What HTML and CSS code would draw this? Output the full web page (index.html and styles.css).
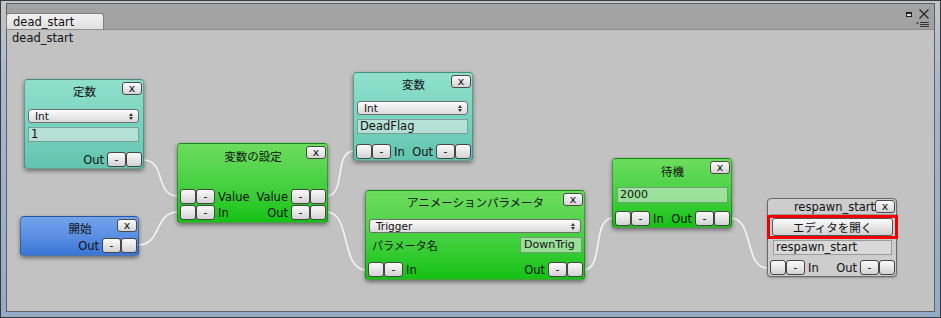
FILE: index.html
```html
<!DOCTYPE html>
<html lang="ja">
<head>
  <meta charset="UTF-8">
  <title>dead_start</title>
  <link rel="stylesheet" href="styles.css">
</head>
<body>
  <div class="window">
    <div class="panel">
      <div class="tabbar">
        <div class="tab">dead_start</div>
        <svg class="tools" width="30" height="20" viewBox="0 0 30 20">
          <rect x="2" y="4" width="6" height="5" fill="#222"/>
          <rect x="3" y="6" width="4" height="2" fill="#ddd"/>
          <path d="M15.5 1.5 L24.5 10.5 M24.5 1.5 L15.5 10.5" stroke="#222" stroke-width="1.2"/>
          <path d="M12 14.5 L15 14.5 L13.5 16.5 Z" fill="#333"/>
          <path d="M16 14.5 H25 M16 16.5 H25 M16 18.5 H25" stroke="#333" stroke-width="1"/>
        </svg>
      </div>
      <div class="content">
        <div class="graph-name">dead_start</div>

        <svg class="wires" width="927" height="281">
          <path d="M136 130 C160 130 147 166 171 166"/>
          <path d="M131 215 C155 215 147 182 171 182"/>
          <path d="M319 166 C340 166 326 121 347 121"/>
          <path d="M319 182 C345 182 333 240 359 240"/>
          <path d="M576 240 C598 240 584 188 606 188"/>
          <path d="M723 188 C748 188 736 238 761 238"/>
        </svg>

        <div class="node teal n-const">
          <div class="title">定数</div>
          <button class="close">x</button>
          <div class="popup">Int<span class="arrows"></span></div>
          <div class="field">1</div>
          <div class="ports end">
            <span class="lbl">Out</span><button class="port">-</button><button class="port blank"></button>
          </div>
        </div>

        <div class="node blue n-start">
          <div class="title">開始</div>
          <button class="close">x</button>
          <div class="ports end">
            <span class="lbl">Out</span><button class="port">-</button><button class="port blank"></button>
          </div>
        </div>

        <div class="node green n-set">
          <div class="title">変数の設定</div>
          <button class="close">x</button>
          <div class="ports">
            <button class="port blank"></button><button class="port">-</button><span class="lbl">Value</span>
            <span class="lbl push">Value</span><button class="port">-</button><button class="port blank"></button>
          </div>
          <div class="ports second">
            <button class="port blank"></button><button class="port">-</button><span class="lbl">In</span>
            <span class="lbl push">Out</span><button class="port">-</button><button class="port blank"></button>
          </div>
        </div>

        <div class="node teal n-var">
          <div class="title">変数</div>
          <button class="close">x</button>
          <div class="popup">Int<span class="arrows"></span></div>
          <div class="field">DeadFlag</div>
          <div class="ports">
            <button class="port blank"></button><button class="port">-</button><span class="lbl">In</span>
            <span class="lbl push">Out</span><button class="port">-</button><button class="port blank"></button>
          </div>
        </div>

        <div class="node green n-anim">
          <div class="title">アニメーションパラメータ</div>
          <button class="close">x</button>
          <div class="popup">Trigger<span class="arrows"></span></div>
          <div class="param-row">
            <span class="param-lbl">パラメータ名</span>
            <div class="field small">DownTrig</div>
          </div>
          <div class="ports">
            <button class="port blank"></button><button class="port">-</button><span class="lbl">In</span>
            <span class="lbl push">Out</span><button class="port">-</button><button class="port blank"></button>
          </div>
        </div>

        <div class="node green n-wait">
          <div class="title">待機</div>
          <button class="close">x</button>
          <div class="field">2000</div>
          <div class="ports">
            <button class="port blank"></button><button class="port">-</button><span class="lbl">In</span>
            <span class="lbl push">Out</span><button class="port">-</button><button class="port blank"></button>
          </div>
        </div>

        <div class="node gray n-sub">
          <div class="title">respawn_start</div>
          <button class="close">x</button>
          <div class="highlight"><button class="open-btn">エディタを開く</button></div>
          <div class="field">respawn_start</div>
          <div class="ports">
            <button class="port blank"></button><button class="port">-</button><span class="lbl">In</span>
            <span class="lbl push">Out</span><button class="port">-</button><button class="port blank"></button>
          </div>
        </div>
      </div>
    </div>
  </div>
</body>
</html>
```

FILE: styles.css
```css
body { margin: 0; font-family: "DejaVu Sans", "Noto Sans CJK JP", sans-serif; font-size: 11px; color: #111; }

.window { width: 941px; height: 318px; box-sizing: border-box; padding: 2px 5px 5px 5px; border: 1px solid #3a3a3a; background: linear-gradient(#c4c6c8, #a6b9ce 25%, #93abc7); }
.panel { height: 100%; box-sizing: border-box; border: 1px solid #5c6064; display: flex; flex-direction: column; }

.tabbar { height: 25px; background: #a2a2a2; display: flex; align-items: flex-end; flex-shrink: 0; }
.tab { margin-left: -1px; height: 16px; width: 98px; box-sizing: border-box; padding: 1px 0 0 6px; line-height: 14px; font-size: 11.5px; background: linear-gradient(#f2f2f2, #e0e0e0); border: 1px solid #7e7e7e; border-bottom: none; border-radius: 3px 3px 0 0; }
.tools { margin-left: auto; align-self: flex-start; margin-top: 4px; }

.content { flex: 1; position: relative; background: #c2c2c2; border-top: 1px solid #8e8e8e; overflow: hidden; }
.graph-name { padding: 1px 5px; line-height: 14px; font-size: 11.5px; }

.wires { position: absolute; left: 0; top: 0; }
.wires path { fill: none; stroke: #f4f4f4; stroke-width: 1.6; }

/* nodes */
.node { position: absolute; box-sizing: border-box; display: flex; flex-direction: column; padding: 0 1px 1px 2px; border: 1px solid rgba(0,0,0,0.28); border-radius: 4px; box-shadow: 0 2px 4px rgba(0,0,0,0.45); }
.node .title { height: 24px; line-height: 24px; text-align: center; white-space: nowrap; font-size: 11.5px; }
.teal { background: linear-gradient(#8fe0cc, #78d4c0 50%, #62c4ae); }
.green { background: linear-gradient(#6cdc5e, #44d040 55%, #14c214); }
.blue { background: linear-gradient(#72a3ea, #5a8fe2 50%, #3a76d8); }
.gray { background: #cdcdcd; border-color: #6a6a6a; box-shadow: 0 1px 2px rgba(0,0,0,0.25); }

button { font-family: inherit; font-size: 11px; color: #111; padding: 0; margin: 0; }
.close { position: absolute; top: 2px; right: 1px; width: 20px; height: 13px; line-height: 10px; background: linear-gradient(#fbfbfb, #d4d4d4); border: 1px solid #4a4a4a; border-radius: 3px; }

.popup { margin: 4px 3px 0 1px; height: 14px; box-sizing: border-box; padding-left: 6px; line-height: 12px; font-size: 10.5px; position: relative; background: linear-gradient(#fcfcfc, #dadada); border: 1px solid #6e6e6e; border-radius: 3px; }
.arrows { position: absolute; right: 5px; top: 3px; width: 0; height: 0; border: 2px solid transparent; border-bottom: 3px solid #333; border-top: none; }
.arrows::after { content: ""; position: absolute; left: -2px; top: 4px; border: 2px solid transparent; border-top: 3px solid #333; border-bottom: none; }

.field { margin: 4px 3px 0 1px; height: 15px; box-sizing: border-box; padding-left: 2px; line-height: 13px; font-size: 11.5px; white-space: nowrap; overflow: hidden; background: rgba(225,235,232,0.6); border: 1px solid rgba(60,80,70,0.45); }
.green .field { background: rgba(215,235,215,0.6); }

.ports { margin-top: auto; display: flex; align-items: center; height: 15px; }
.ports.second { margin-top: 1px; }
.ports.end { justify-content: flex-end; }
.port { width: 19px; height: 15px; line-height: 12px; background: linear-gradient(#fbfbfb, #d2d2d2); border: 1px solid #454545; border-radius: 3px; }
.port.blank { width: 16px; }
.lbl { margin: 0 3px; font-size: 11.5px; white-space: nowrap; }
.lbl.push { margin-left: auto; }

.param-row { display: flex; align-items: center; margin-top: 4px; padding-left: 4px; }
.param-lbl { font-size: 11px; }
.field.small { margin: 0 1px 0 auto; width: 62px; height: 16px; line-height: 14px; padding-left: 3px; font-size: 11px; }

/* node placement on the graph canvas */
.n-const { left: 17px; top: 49px; width: 120px; height: 90px; }
.n-const .popup { margin-top: 5px; }

.n-start { left: 13px; top: 186px; width: 119px; height: 40px; padding-bottom: 2px; }
.n-start .title { height: 20px; line-height: 24px; }

.n-set { left: 170px; top: 113px; width: 151px; height: 80px; padding-bottom: 2px; }
.n-set .title { line-height: 26px; }

.n-var { left: 346px; top: 42px; width: 120px; height: 89px; }

.n-anim { left: 358px; top: 160px; width: 220px; height: 90px; padding-bottom: 2px; }
.n-anim .popup { margin-right: 2px; }

.n-wait { left: 605px; top: 128px; width: 120px; height: 70px; }
.n-wait .title { line-height: 26px; }
.n-wait .field { height: 16px; line-height: 14px; margin: 4px 2px 0 2px; font-size: 11px; }

.n-sub { left: 760px; top: 168px; width: 130px; height: 79px; }
.n-sub .title { height: 15px; line-height: 17px; text-align: right; padding-right: 20px; overflow: hidden; border-bottom: 1px solid #9a9a9a; font-size: 11.5px; }
.n-sub .close { top: 1px; }
.highlight { margin: 0 -3px 0 -3px; border: 3px solid #ee0000; padding: 0 2px; }
.open-btn { display: block; width: 100%; height: 18px; font-size: 11.5px; background: linear-gradient(#fdfdfd, #cfcfcf); border: 1px solid #555; border-radius: 3px; }
.n-sub .field { margin: 1px 3px 0 3px; height: 15px; line-height: 12px; background: #d9d9d9; border-color: #9c9c9c; }
```
